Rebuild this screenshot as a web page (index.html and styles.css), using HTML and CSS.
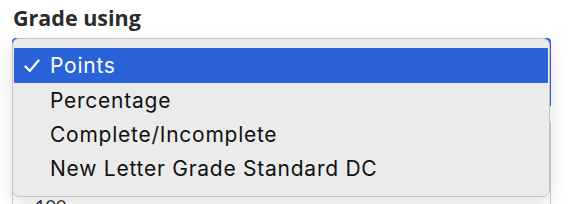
FILE: index.html
```html
<!doctype html>
<html lang="en">
    <head>
        <meta charset="UTF-8" />
        <title>Grade using</title>
        <link rel="stylesheet" href="styles.css">
    </head>
    <body>
        <div class="field">
            <label class="label">Grade using</label>
            <div class="control">
                <div class="select"></div>
                <div class="points-box">
                    <span class="points-value">100</span>
                </div>

                <ul class="menu">
                    <li class="item selected">
                        <svg class="check" width="16" height="14" viewBox="0 0 16 14">
                            <path d="M1.5 7.5 L5.8 12 L14.5 1.5" fill="none" stroke="#fff" stroke-width="2.2" stroke-linecap="round" stroke-linejoin="round"/>
                        </svg>
                        <span>Points</span>
                    </li>
                    <li class="item">Percentage</li>
                    <li class="item">Complete/Incomplete</li>
                    <li class="item">New Letter Grade Standard DC</li>
                </ul>
            </div>
        </div>
    </body>
</html>
```

FILE: styles.css
```css
* {
    margin: 0;
    padding: 0;
    box-sizing: border-box;
}
body {
    background: #fff;
    overflow: hidden;
}

.field {
    padding: 4px 0 0 12px;
    width: 551px;
}

.label {
    display: block;
    font-family: "Open Sans", Lato, sans-serif;
    font-weight: 700;
    font-size: 21.5px;
    line-height: 28px;
    color: #2b2b2b;
    padding-left: 1px;
}

.control {
    position: relative;
    margin-top: 6px;
}

.select {
    height: 70px;
    border: 2px solid #2a62d9;
    border-radius: 4px;
}

.points-box {
    margin-top: 12px;
    height: 120px;
    border: 1px solid #c7cdd1;
    border-radius: 4px;
    padding: 74px 0 0 22px;
}
.points-value {
    font-family: Lato, sans-serif;
    font-size: 18px;
    color: #2d2d2d;
}

.menu {
    position: absolute;
    top: 0;
    left: 0;
    width: 538px;
    height: 159px;
    list-style: none;
    background: #ebebeb;
    border: 1px solid #c4c4c4;
    border-radius: 7px;
    padding: 9px 1px 0;
    box-shadow: 0 6px 18px rgba(0, 0, 0, 0.12);
}

.item {
    height: 34px;
    display: flex;
    align-items: center;
    padding-left: 36px;
    font-family: Inter, "Liberation Sans", sans-serif;
    font-size: 21px;
    letter-spacing: 0.75px;
    color: #111;
}
.item.selected {
    height: 35px;
    background: #2a62d9;
    color: #fff;
    padding-left: 10px;
    gap: 10px;
    border-radius: 1px;
}
.check {
    display: block;
}
```
